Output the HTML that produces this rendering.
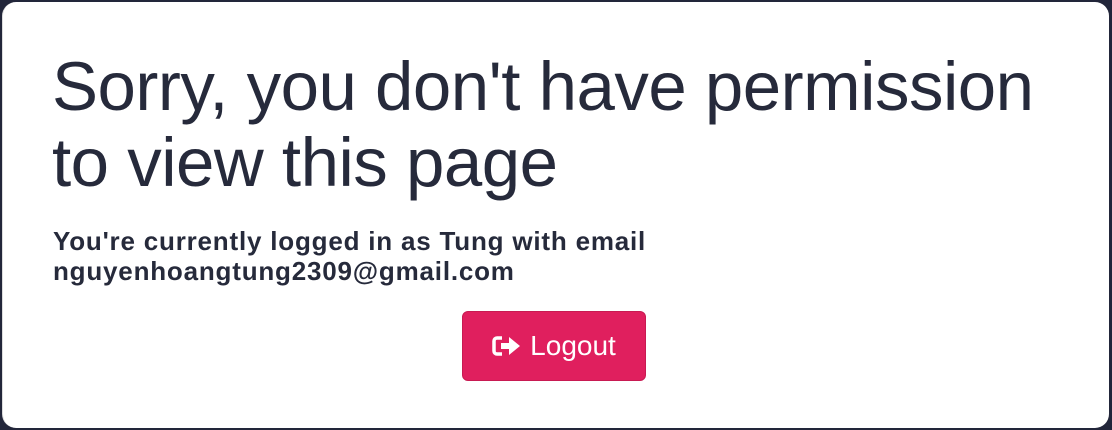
<!DOCTYPE html>
<html><head><style>
html,body{margin:0;padding:0;width:1112px;height:430px;overflow:hidden;background:#22263a;}
.card{position:absolute;left:2px;top:2px;width:1106px;height:426px;background:#fff;border-radius:14px;border-left:1px solid #ddd;}
h1{position:absolute;left:49px;top:47px;margin:0;font-family:"Liberation Sans",sans-serif;font-weight:normal;font-size:69px;line-height:76px;color:#262a3b;letter-spacing:-0.5px;white-space:nowrap;}
p{position:absolute;left:50px;top:224px;margin:0;font-family:"Liberation Sans",sans-serif;font-weight:bold;font-size:26px;line-height:30px;color:#262a3b;letter-spacing:0.8px;white-space:nowrap;}
.btn{position:absolute;left:459px;top:309px;width:182px;height:68px;background:#e01f5e;border:1px solid #c81a52;border-radius:6px;color:#fff;font-family:"Liberation Sans",sans-serif;font-size:28px;display:flex;align-items:center;justify-content:center;gap:8px;}
</style></head><body>
<div class="card">
<h1>Sorry, you don't have permission<br>to view this page</h1>
<p>You're currently logged in as Tung with email<br>nguyenhoangtung2309@gmail.com</p>
<div class="btn"><svg width="30" height="22" viewBox="0 0 30 22"><path d="M10 3H5a3 3 0 0 0-3 3v10a3 3 0 0 0 3 3h5" stroke="#fff" stroke-width="3.5" fill="none"/><path d="M9 8h8V2l11 9-11 9v-6H9z" fill="#fff"/></svg><span>Logout</span></div>
</div>
</body></html>
